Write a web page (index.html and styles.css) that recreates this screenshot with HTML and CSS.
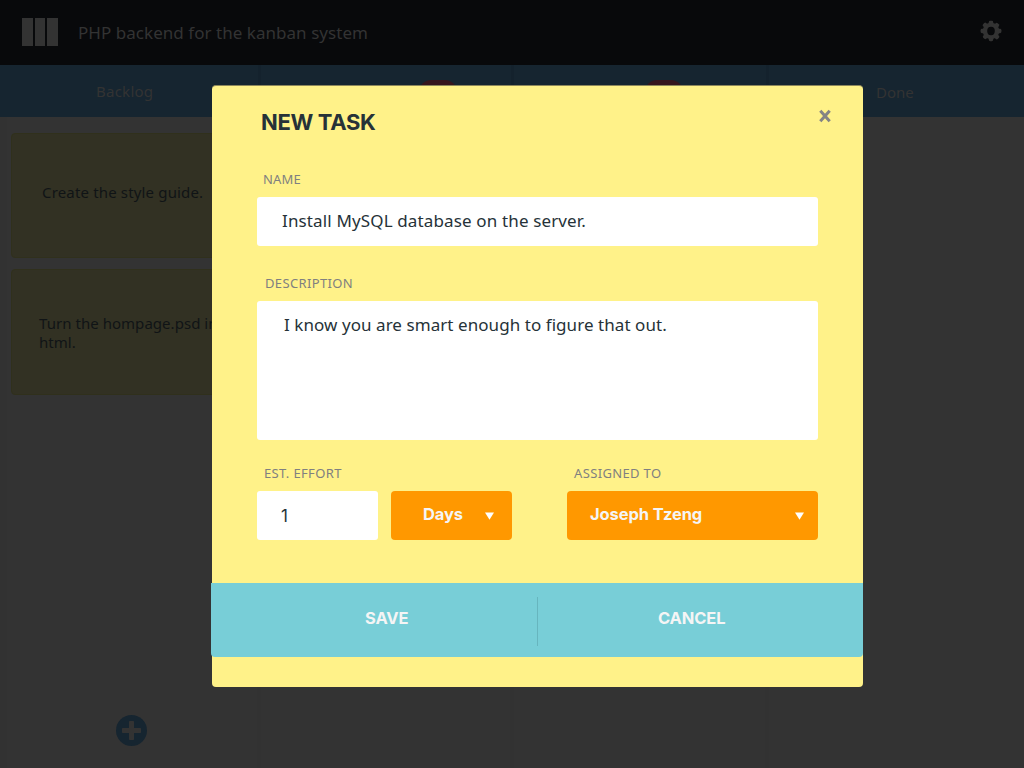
FILE: index.html
```html
<!DOCTYPE html>
<html lang="en">
<head>
<meta charset="utf-8">
<title>PHP backend for the kanban system</title>
<link rel="stylesheet" href="styles.css">
</head>
<body>
<div class="app">
  <header class="topbar">
    <svg class="logo" width="36" height="28" viewBox="0 0 36 28"><path d="M0 0h11v28H0zM13 0h10v28H13zM25 0h11v28H25z"/></svg>
    <span class="project">PHP backend for the kanban system</span>
    <svg class="gear" width="22" height="22" viewBox="-11 -11 22 22">
      <defs><mask id="hole"><rect x="-11" y="-11" width="22" height="22" fill="#fff"/><ellipse rx="3.8" ry="4.2" fill="#000"/></mask></defs>
      <g mask="url(#hole)">
        <circle r="8.300"/>
        <g id="teeth"><rect x="-2.2" y="-10.2" width="4.4" height="20.4" rx="1.4"/><rect x="-10.4" y="-2.2" width="20.8" height="4.4" rx="1.4"/></g>
        <use href="#teeth" transform="rotate(45)"/>
      </g>
    </svg>
  </header>
  <nav class="heads">
    <div class="head"><span class="backlog">Backlog</span></div>
    <div class="head"><span class="badge first"></span></div>
    <div class="head"><span class="badge second"></span></div>
    <div class="head"><span class="done">Done</span></div>
  </nav>
  <main class="board">
    <section class="column">
      <article class="card style-guide">Create the style guide.</article>
      <article class="card homepage">Turn the hompage.psd into<br>html.</article>
      <svg class="add" width="31" height="31" viewBox="0 0 31 31"><circle cx="15.5" cy="15.5" r="15.5"/><path d="M13.7 6h3.600q.7 0 .7.7V13h6.300q.7 0 .7.7v3.600q0 .7-.7.7H18v6.300q0 .7-.7.7h-3.600q-.7 0-.7-.7V18H6.700q-.7 0-.7-.7v-3.600q0-.7.7-.7H13V6.700q0-.7.7-.7z"/></svg>
    </section>
    <section class="column"></section>
    <section class="column"></section>
    <section class="column"></section>
  </main>
</div>

<form class="modal">
  <div class="title-row">
    <h1>NEW TASK</h1>
    <svg class="close" width="12" height="14" viewBox="0 0 12 14"><path d="M1.300 1.800l9.400 10.400M10.700 1.800L1.300 12.200"/></svg>
  </div>
  <div class="fields">
    <div class="label name-label">NAME</div>
    <div class="input name">Install MySQL database on the server.</div>
    <div class="label desc-label">DESCRIPTION</div>
    <div class="input desc">I know you are smart enough to figure that out.</div>
    <div class="row">
      <div class="effort">
        <div class="label effort-label">EST. EFFORT</div>
        <div class="pair">
          <div class="input amount">1</div>
          <div class="select days"><span>Days</span><svg width="9" height="8" viewBox="0 0 9 8"><path d="M0 .5h9L4.500 7.800z"/></svg></div>
        </div>
      </div>
      <div class="assigned">
        <div class="label assigned-label">ASSIGNED TO</div>
        <div class="select person"><span>Joseph Tzeng</span><svg width="9" height="8" viewBox="0 0 9 8"><path d="M0 .5h9L4.500 7.800z"/></svg></div>
      </div>
    </div>
  </div>
  <div class="actions">
    <div class="action save">SAVE</div>
    <div class="divider"></div>
    <div class="action cancel">CANCEL</div>
  </div>
</form>
</body>
</html>
```
FILE: styles.css
```css
* { box-sizing: border-box; }
body { margin: 0; font-family: "Noto Sans", sans-serif; background: #333; overflow: hidden; }
svg { display: block; flex: none; }

.app { height: 768px; display: flex; flex-direction: column; }
.topbar { height: 65px; padding: 0 22px; display: flex; align-items: center; background: #08090b; }
.logo { fill: #333; margin-top: -1px; }
.project { margin-left: 20px; font-size: 17px; line-height: 24px; letter-spacing: .04px; color: #333; }
.gear { margin: -3px 0 0 auto; fill: #333; }

.heads { height: 52px; display: grid; grid-template-columns: 261px 253px 255px 1fr; background: #162530; color: #333; font-size: 15px; line-height: 20px; }
.head { position: relative; overflow: hidden; border-right: 3px solid #14222d; }
.head:last-child { border-right: 0; }
.backlog { display: block; padding: 16px 0 0 96px; letter-spacing: .25px; }
.done { display: block; padding: 17px 0 0 107px; letter-spacing: 0; }
.badge { display: block; width: 38px; height: 24px; margin-top: 15px; border-radius: 12px; background: #36161d; }
.first { margin-left: 158px; }
.second { margin-left: 131px; }

.board { flex: 1; display: grid; grid-template-columns: 261px 253px 255px 1fr; }
.column { padding: 16px 11px 22px; display: flex; flex-direction: column; border-right: 4px solid #323232; }
.column:first-child { border-left: 7px solid #323232; padding-left: 4px; }
.column:last-child { border-right: 0; }
.card { height: 125px; border: 1px solid #30301c; border-radius: 4px; background: #323123; color: #101416; font-size: 15px; line-height: 19px; white-space: nowrap; }
.card + .card { margin-top: 11px; height: 126px; }
.style-guide { padding: 49px 0 0 30px; letter-spacing: .16px; }
.homepage { padding: 44px 0 0 27px; letter-spacing: .04px; }
.add { margin: auto 0 0 105px; }
.add circle { fill: #162530; }
.add path { fill: #333; }

.modal { position: absolute; left: 212px; top: 85px; width: 651px; height: 602px; border-top: 1px solid #8d875b; border-radius: 4px; background: #fff289; color: #263238; }
.title-row { height: 82px; padding: 20px 32px 0 49px; display: flex; justify-content: space-between; }
h1 { margin: 0; font: 700 22px/32px Inter, sans-serif; letter-spacing: -.35px; }
.close { margin-top: 3px; fill: none; stroke: #848484; stroke-width: 3; }
.fields { padding: 0 45px; }
.label { font-size: 13px; line-height: 18px; letter-spacing: .35px; color: #808080; }
.name-label { margin-top: 2px; padding-left: 6px; letter-spacing: .2px; }
.input { background: #fff; border-radius: 3px; font-size: 17px; line-height: 48px; white-space: nowrap; }
.name { margin-top: 9px; height: 49px; padding-left: 25px; letter-spacing: .14px; }
.desc-label { margin-top: 28px; padding-left: 8px; }
.desc { margin-top: 9px; height: 139px; padding-left: 27px; letter-spacing: .06px; }
.row { margin-top: 24px; display: flex; justify-content: space-between; }
.effort-label { padding-left: 7px; }
.assigned-label { padding-left: 7px; }
.pair { margin-top: 9px; display: flex; gap: 13px; }
.amount { width: 121px; height: 49px; padding: 1px 0 0 24px; font-family: Inter, sans-serif; }
.select { height: 49px; display: flex; align-items: center; justify-content: space-between; border-radius: 4px; background: #ff9800; color: #f5f5f5; font: 700 16.5px/24px Inter, sans-serif; letter-spacing: -.1px; }
.select span { margin-top: -4px; }
.select svg { fill: #fff; }
.days { width: 121px; padding: 0 18px 0 32px; }
.person { width: 251px; margin-top: 9px; padding: 0 14px 0 23px; }
.actions { width: 652px; height: 74px; margin: 43px 0 0 -1px; display: grid; grid-template-columns: 326px 1px 325px; align-items: start; border-radius: 0 0 4px 4px; background: #78ced7; color: #f5f5f5; font: 700 16.5px/70px Inter, sans-serif; letter-spacing: -.15px; }
.save { padding-left: 154px; }
.cancel { padding-left: 120px; }
.divider { height: 49px; margin-top: 14px; background: #67b5be; }
```
